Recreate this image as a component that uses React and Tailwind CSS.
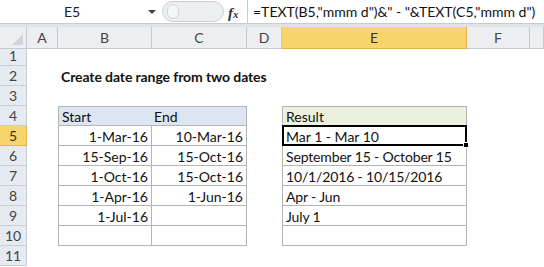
import React from "react";

const cols = ["A", "B", "C", "D", "E", "F", ""];
const colW = "grid-cols-[27px_31px_94px_95px_35px_185px_63px_1fr]";

const startDates = ["1-Mar-16", "15-Sep-16", "1-Oct-16", "1-Apr-16", "1-Jul-16", ""];
const endDates = ["10-Mar-16", "15-Oct-16", "15-Oct-16", "1-Jun-16", "", ""];
const results = ["Mar 1 - Mar 10", "September 15 - October 15", "10/1/2016 - 10/15/2016", "Apr - Jun", "July 1", ""];

function RowHead({ n, active }) {
  return (
    <div
      className={
        "h-[20px] flex items-center justify-center text-[14px] border-b border-r " +
        (active
          ? "bg-[#f8d46c] border-[#e3b44a] text-[#333]"
          : "bg-[#e6ebf1] border-[#c8ced6] text-[#444]")
      }
    >
      {n}
    </div>
  );
}

export default function App() {
  const font = { fontFamily: "Lato, 'Open Sans', sans-serif" };
  return (
    <div className="w-[544px] h-[267px] overflow-hidden bg-white text-[#111]" style={font}>
      {/* formula bar */}
      <div className="h-[24px] flex items-stretch bg-white border-b border-[#c6cbd2]">
        <div className="w-[160px] relative flex items-center justify-center text-[14px] text-[#222]">
          <span className="-ml-[16px]">E5</span>
          <span className="absolute right-[4px] top-[10px] w-0 h-0 border-l-[4px] border-r-[4px] border-t-[4px] border-l-transparent border-r-transparent border-t-[#444]"></span>
        </div>
        <div className="w-[87px] relative flex items-center">
          <div className="absolute left-[2px] top-[1px] w-[62px] h-[21px] rounded-full border border-[#c9cdd3] bg-[#eceef1]"></div>
          <div className="absolute left-[7px] top-[4px] w-[12px] h-[15px] rounded-full bg-[#f4f5f7] border border-[#d0d4d9]"></div>
          <span
            className="absolute left-[68px] top-[2px] text-[15px] italic font-bold text-[#333]"
            style={{ fontFamily: "'Liberation Serif', serif" }}
          >
            f<span className="text-[11px]">x</span>
          </span>
        </div>
        <div className="flex-1 border-l border-[#c6cbd2] flex items-center pl-[5px] text-[14px] text-[#111] whitespace-nowrap">
          =TEXT(B5,"mmm d")&amp;" - "&amp;TEXT(C5,"mmm d")
        </div>
      </div>
      <div className="h-[3px] bg-[#dfe3e8]"></div>

      {/* column headers */}
      <div className={"grid " + colW + " h-[19px]"}>
        <div className="relative bg-[#eceef1] border-r border-b border-[#c5cad1]">
          <svg className="absolute right-[3px] bottom-[3px]" width="11" height="11" viewBox="0 0 11 11">
            <polygon points="11,0 11,11 0,11" fill="#cfd4da" />
          </svg>
        </div>
        {cols.map((c, i) => (
          <div
            key={i}
            className={
              "flex items-center justify-center text-[14px] border-r border-b " +
              (c === "E"
                ? "bg-[#f8d46c] border-[#e2b24c] text-[#333]"
                : "bg-[#eceef1] border-[#c5cad1] text-[#444]")
            }
          >
            {c}
          </div>
        ))}
      </div>

      {/* rows */}
      <div className={"grid " + colW}>
        <RowHead n={1} />
        <div className="col-span-7 h-[20px]"></div>
        <RowHead n={2} />
        <div></div>
        <div className="col-span-6 h-[20px] flex items-center pt-[1px] pl-[3px] text-[14px] font-bold whitespace-nowrap tracking-[-0.1px]">
          Create date range from two dates
        </div>
        <RowHead n={3} />
        <div className="col-span-7 h-[20px]"></div>
        <RowHead n={4} />
        <div></div>
        <div className="h-[20px] bg-[#dce6f1] border border-[#b4b4b4] flex items-center pt-[1px] pl-[3px] text-[14px]">Start</div>
        <div className="h-[20px] bg-[#dce6f1] border-t border-r border-b border-[#b4b4b4] flex items-center pt-[1px] pl-[3px] text-[14px] -ml-[1px]">End</div>
        <div></div>
        <div className="h-[20px] bg-[#ebf1de] border border-[#b4b4b4] flex items-center pt-[1px] pl-[3px] text-[14px]">Result</div>
        <div className="col-span-2"></div>
        {startDates.map((s, i) => (
          <React.Fragment key={i}>
            <RowHead n={5 + i} active={i === 0} />
            <div></div>
            <div className="h-[20px] border-l border-r border-b border-[#b4b4b4] flex items-center justify-end pt-[1px] pr-[3px] text-[14px]">{s}</div>
            <div className="h-[20px] border-r border-b border-[#b4b4b4] flex items-center justify-end pt-[1px] pr-[3px] text-[14px] -ml-[1px]">{endDates[i]}</div>
            <div></div>
            {i === 0 ? (
              <div className="relative -mt-[1px] h-[21px] border-2 border-black flex items-center pt-[1px] pl-[2px] text-[14px]">
                {results[i]}
                <span className="absolute -right-[4px] -bottom-[4px] w-[6px] h-[6px] bg-black border border-white"></span>
              </div>
            ) : (
              <div className="h-[20px] border-l border-r border-b border-[#b4b4b4] flex items-center pt-[1px] pl-[3px] text-[14px] whitespace-nowrap tracking-[-0.15px]">{results[i]}</div>
            )}
            <div className="col-span-2"></div>
          </React.Fragment>
        ))}
        <RowHead n={11} />
        <div className="col-span-7 h-[20px]"></div>
      </div>
    </div>
  );
}
